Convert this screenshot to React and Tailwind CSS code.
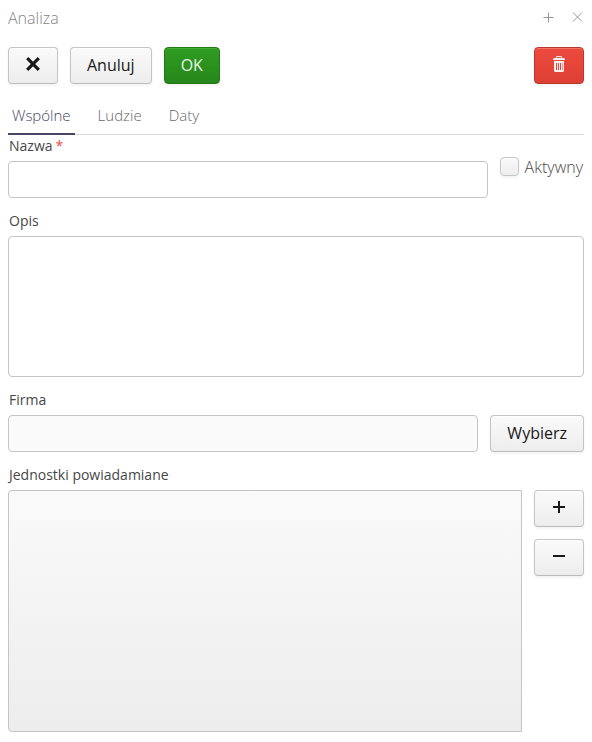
import { useState } from 'react';

const baseButton = 'h-[37px] rounded border text-center text-base leading-[35px] cursor-pointer';
const variants = {
    normal: 'border-[#c5c5c5] border-b-[#bcbcbc] bg-linear-to-b from-[#fafafa] to-[#ededed] text-[#191919] shadow-[inset_0_1px_0_#fff,inset_0_-1px_0_#ebebeb,0_2px_3px_rgba(0,0,0,0.05)]',
    friendly: 'border-[#1f7a14] bg-linear-to-b from-[#2f9c21] to-[#26871a] text-[#eaf4e8] shadow-[inset_0_1px_0_#41a934,0_2px_3px_rgba(0,0,0,0.05)]',
    danger: 'border-[#b8382f] bg-linear-to-b from-[#ee4a3e] to-[#dd3f34] text-[#fdf0ef] shadow-[inset_0_1px_0_#f56f65,0_2px_3px_rgba(0,0,0,0.05)]',
};

const Button = ({ variant = 'normal', icon = false, children, ...props }) => (
    <button
        type="button"
        className={`${baseButton} ${variants[variant]} ${icon ? 'w-[50px] flex justify-center items-center pb-1' : 'px-4'}`}
        {...props}
    >
        {children}
    </button>
);

const Label = ({ htmlFor, required, children }) => (
    <label htmlFor={htmlFor} className="block h-[26px] pl-px text-sm leading-[22px] text-[#474747]">
        {children}
        {required && <span className="ml-[3px] text-[#ed473b]">*</span>}
    </label>
);

const TrashIcon = () => (
    <svg width="12" height="16" viewBox="0 0 12 16" fill="currentColor">
        <path d="M4 0H8L9 1V2H11L12 3V4H0V3L1 2H3V1ZM4 1V2H8V1Z" fillRule="evenodd" />
        <path d="M1 5H11V15L10 16H2L1 15ZM3 7V14H4V7ZM5 7V14H6V7ZM7 7V14H8V7ZM9 7V14H9.5V7Z" fillRule="evenodd" />
    </svg>
);

const tabs = ['Wspólne', 'Ludzie', 'Daty'];

const App = () => {
    const [activeTab, setActiveTab] = useState('Wspólne');

    return (
        <div className="min-h-screen bg-white px-2 pb-[10px] font-['Open_Sans','Noto_Sans',sans-serif] text-base">
            {/* Window header */}
            <header className="flex h-[37px] items-center justify-between">
                <h1 className="font-light leading-[37px] text-[#848484]">Analiza</h1>
                <div className="flex gap-4 pb-[3px] text-[#999]">
                    <button type="button" aria-label="Maximize">
                        <svg width="13" height="13" viewBox="0 0 13 13" fill="none" stroke="currentColor">
                            <path d="M6.5 1.5V11.5M1.5 6.5H11.5" />
                        </svg>
                    </button>
                    <button type="button" aria-label="Close">
                        <svg width="13" height="13" viewBox="0 0 13 13" fill="none" stroke="currentColor">
                            <path d="M2 1.5L11 10.5M11 1.5L2 10.5" />
                        </svg>
                    </button>
                </div>
            </header>

            {/* Toolbar */}
            <div className="flex gap-3 pt-[10px]">
                <Button icon aria-label="Zamknij">
                    <svg width="14" height="14" viewBox="0 0 14 14" fill="none" stroke="currentColor" strokeWidth="3.2">
                        <path d="M1.2 1.2L12.8 12.8M12.8 1.2L1.2 12.8" />
                    </svg>
                </Button>
                <Button>Anuluj</Button>
                <Button variant="friendly">OK</Button>
                <div className="ml-auto">
                    <Button variant="danger" icon aria-label="Usuń">
                        <TrashIcon />
                    </Button>
                </div>
            </div>

            {/* Tabs */}
            <div role="tablist" className="mt-3 flex h-[39px] gap-[19px] border-b border-[#dadada]">
                {tabs.map((tab) => (
                    <button
                        key={tab}
                        type="button"
                        role="tab"
                        aria-selected={tab === activeTab}
                        onClick={() => setActiveTab(tab)}
                        className={`-mb-px border-b-2 px-1 pt-px text-[15px] leading-9 font-light ${tab === activeTab ? 'border-[#464765] text-[#464765]' : 'border-transparent text-[#696969]'}`}
                    >
                        {tab}
                    </button>
                ))}
            </div>

            <form className="flex flex-col gap-3">
                <div className="flex items-center gap-3">
                    <div className="flex-1">
                        <Label htmlFor="name" required>Nazwa</Label>
                        <input id="name" type="text" required className="block h-[37px] w-full rounded border border-[#c5c5c5] bg-white px-2 outline-none" />
                    </div>
                    <div className="flex items-center gap-1.5 pr-px">
                        <input
                            id="active"
                            type="checkbox"
                            className="size-[19px] appearance-none rounded border border-[#c5c5c5] bg-linear-to-b from-[#fafafa] to-[#ededed] shadow-[inset_0_1px_0_#fff,0_2px_3px_rgba(0,0,0,0.05)] checked:from-[#464765] checked:to-[#464765]"
                        />
                        <label htmlFor="active" className="font-light text-[#474747]">Aktywny</label>
                    </div>
                </div>

                <div>
                    <Label htmlFor="description">Opis</Label>
                    <textarea id="description" className="block h-[141px] w-full resize-none rounded border border-[#c5c5c5] bg-white p-2 outline-none" />
                </div>

                <div className="flex items-end gap-3">
                    <div className="flex-1">
                        <Label htmlFor="company">Firma</Label>
                        <input id="company" type="text" readOnly className="block h-[37px] w-full rounded border border-[#c5c5c5] bg-[#fafafa] px-2 outline-none" />
                    </div>
                    <Button>Wybierz</Button>
                </div>

                <div>
                    <Label htmlFor="units">Jednostki powiadamiane</Label>
                    <div className="flex gap-3">
                        <select
                            id="units"
                            multiple
                            className="h-[242px] min-w-0 flex-1 appearance-none rounded-l border border-[#c5c5c5] bg-linear-to-b from-[#fafafa] to-[#ededed] outline-none"
                        />
                        <div className="flex flex-col gap-3">
                            <Button icon aria-label="Dodaj">
                                <svg width="12" height="12" viewBox="0 0 12 12" stroke="currentColor" strokeWidth="2">
                                    <path d="M6 0V12M0 6H12" />
                                </svg>
                            </Button>
                            <Button icon aria-label="Usuń jednostkę">
                                <svg width="12" height="12" viewBox="0 0 12 12" stroke="currentColor" strokeWidth="2">
                                    <path d="M0 6H12" />
                                </svg>
                            </Button>
                        </div>
                    </div>
                </div>
            </form>
        </div>
    );
};

export default App;
